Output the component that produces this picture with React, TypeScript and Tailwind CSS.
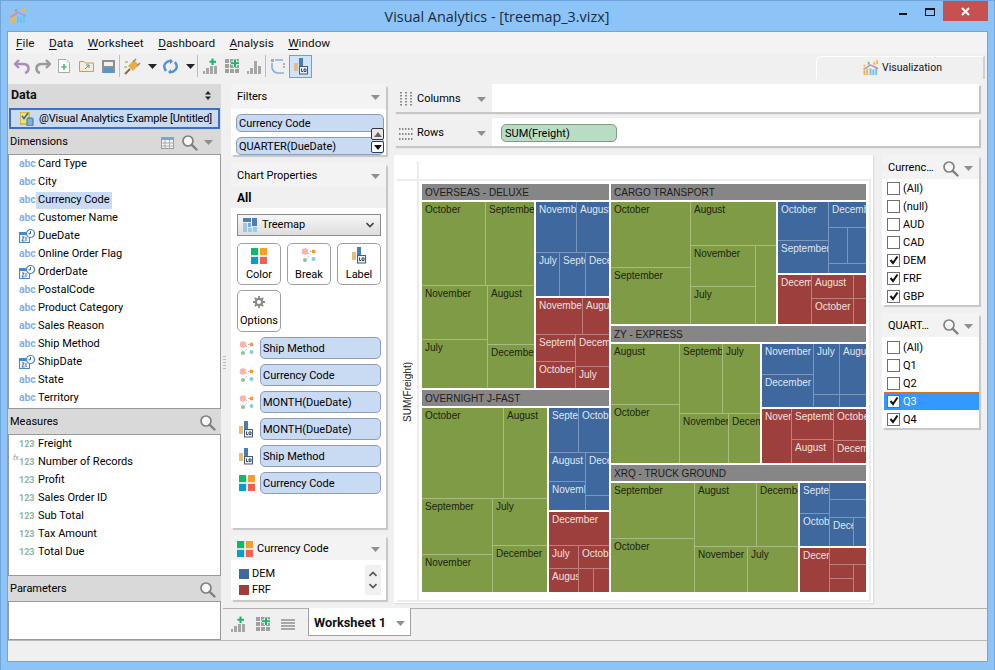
import React from "react";

type Cell = [number, number, number, number, string?];
type Group = { kind: "g" | "b" | "r"; box: [number, number, number, number]; cells: Cell[] };
type Pane = { h: Cell; groups: Group[] };

const panes: Pane[] = [
  {
    h: [422, 184, 609, 200, "OVERSEAS - DELUXE"],
    groups: [
      { kind: "g", box: [422, 202, 534, 388], cells: [[422, 202, 485, 285, "October"], [486, 202, 534, 285, "September"], [422, 286, 487, 339, "November"], [422, 340, 487, 388, "July"], [488, 286, 534, 344, "August"], [488, 345, 534, 388, "December"]] },
      { kind: "b", box: [536, 202, 609, 296], cells: [[536, 202, 576, 252, "November"], [577, 202, 609, 252, "August"], [536, 253, 559, 296, "July"], [560, 253, 585, 296, "September"], [586, 253, 609, 296, "December"]] },
      { kind: "r", box: [536, 298, 609, 388], cells: [[536, 298, 582, 334, "November"], [583, 298, 609, 334, "August"], [536, 335, 575, 361, "September"], [536, 362, 575, 388, "October"], [576, 335, 609, 366, "December"], [576, 367, 609, 388, "July"]] },
    ],
  },
  {
    h: [611, 184, 866, 200, "CARGO TRANSPORT"],
    groups: [
      { kind: "g", box: [611, 202, 776, 324], cells: [[611, 202, 690, 267, "October"], [611, 268, 690, 324, "September"], [691, 202, 776, 245, "August"], [691, 246, 755, 286, "November"], [691, 287, 755, 324, "July"], [756, 246, 776, 324]] },
      { kind: "b", box: [778, 202, 866, 273], cells: [[778, 202, 828, 240, "October"], [778, 241, 828, 273, "September"], [829, 202, 866, 227, "December"], [829, 228, 847, 263], [848, 228, 866, 263], [829, 264, 866, 273]] },
      { kind: "r", box: [778, 275, 866, 324], cells: [[778, 275, 811, 324, "December"], [812, 275, 853, 298, "August"], [812, 299, 853, 324, "October"], [854, 275, 866, 298], [854, 299, 866, 324]] },
    ],
  },
  {
    h: [611, 326, 866, 342, "ZY - EXPRESS"],
    groups: [
      { kind: "g", box: [611, 344, 760, 463], cells: [[611, 344, 679, 404, "August"], [611, 405, 679, 463, "October"], [680, 344, 722, 413, "September"], [723, 344, 760, 413, "July"], [680, 414, 728, 463, "November"], [729, 414, 760, 463, "December"]] },
      { kind: "b", box: [762, 344, 866, 407], cells: [[762, 344, 813, 374, "November"], [762, 375, 813, 407, "December"], [814, 344, 839, 394, "July"], [840, 344, 866, 394, "August"], [814, 395, 839, 407], [840, 395, 866, 407]] },
      { kind: "r", box: [762, 409, 866, 463], cells: [[762, 409, 791, 463, "November"], [792, 409, 833, 439, "September"], [792, 440, 833, 463, "August"], [834, 409, 866, 440, "October"], [834, 441, 866, 463, "December"]] },
    ],
  },
  {
    h: [611, 465, 866, 481, "XRQ - TRUCK GROUND"],
    groups: [
      { kind: "g", box: [611, 483, 798, 592], cells: [[611, 483, 694, 538, "September"], [611, 539, 694, 592, "October"], [695, 483, 756, 546, "August"], [757, 483, 798, 546, "December"], [695, 547, 747, 592, "November"], [748, 547, 798, 592, "July"]] },
      { kind: "b", box: [800, 483, 866, 546], cells: [[800, 483, 829, 513, "September"], [800, 514, 829, 546, "October"], [830, 483, 866, 499], [830, 500, 866, 517], [830, 518, 853, 546, "December"], [854, 518, 866, 546]] },
      { kind: "r", box: [800, 548, 866, 592], cells: [[800, 548, 829, 592, "December"], [830, 548, 866, 564], [830, 565, 853, 578], [830, 579, 853, 592], [854, 565, 866, 592]] },
    ],
  },
  {
    h: [422, 390, 609, 406, "OVERNIGHT J-FAST"],
    groups: [
      { kind: "g", box: [422, 408, 547, 592], cells: [[422, 408, 503, 498, "October"], [504, 408, 547, 498, "August"], [422, 499, 492, 554, "September"], [422, 555, 492, 592, "November"], [493, 499, 547, 545, "July"], [493, 546, 547, 592, "December"]] },
      { kind: "b", box: [549, 408, 609, 510], cells: [[549, 408, 578, 452, "September"], [579, 408, 609, 452, "October"], [549, 453, 585, 481, "August"], [549, 482, 585, 510, "November"], [586, 453, 609, 495, "December"], [586, 496, 609, 510]] },
      { kind: "r", box: [549, 512, 609, 592], cells: [[549, 512, 609, 545, "December"], [549, 546, 578, 568, "July"], [579, 546, 609, 568, "October"], [549, 569, 578, 592, "August"], [579, 569, 593, 592], [594, 569, 609, 592]] },
    ],
  },
];

const tone = {
  g: { fill: "#7f9b46", line: "#a9bc80", text: "#1d2410" },
  b: { fill: "#3f689e", line: "#7c97bd", text: "#dfe7f2" },
  r: { fill: "#9c3f3d", line: "#c07f7d", text: "#f3e0df" },
};

function Treemap() {
  return (
    <svg width={450} height={419} viewBox="419 181 450 419" className="block font-['Liberation_Sans',sans-serif]">
      {panes.map((p, i) => (
        <g key={i}>
          <svg x={p.h[0]} y={p.h[1]} width={p.h[2] - p.h[0]} height={p.h[3] - p.h[1]}>
            <rect width="100%" height="100%" fill="#868686" />
            <text x={3} y={12} fontSize={10} fill="#1c1c1c">{p.h[4]}</text>
          </svg>
          {p.groups.map((g, j) => (
            <g key={j}>
              <rect x={g.box[0]} y={g.box[1]} width={g.box[2] - g.box[0]} height={g.box[3] - g.box[1]} fill={tone[g.kind].line} />
              {g.cells.map((c, k) => (
                <svg key={k} x={c[0]} y={c[1]} width={c[2] - c[0]} height={c[3] - c[1]}>
                  <rect width="100%" height="100%" fill={tone[g.kind].fill} />
                  {c[4] ? <text x={3} y={11} fontSize={10} fill={tone[g.kind].text}>{c[4]}</text> : null}
                </svg>
              ))}
            </g>
          ))}
        </g>
      ))}
    </svg>
  );
}

/* ---------- icons ---------- */
function Logo({ s = 17 }: { s?: number }) {
  return (
    <svg width={s} height={s} viewBox="0 0 17 17">
      <rect x="0.5" y="11" width="2" height="5" fill="#f6b73c" />
      <rect x="3.5" y="9" width="2" height="7" fill="#f6b73c" />
      <rect x="7" y="9" width="2" height="7" fill="#6cc4ee" />
      <rect x="10" y="10" width="2" height="6" fill="#6cc4ee" />
      <rect x="13" y="8" width="2" height="8" fill="#6cc4ee" />
      <path d="M0.5 10 L8 5.5 L16 9" fill="none" stroke="#c58fc0" strokeWidth="1.6" />
      <rect x="0.5" y="5" width="2" height="2" fill="#f6b73c" />
      <rect x="5" y="2" width="2" height="3" fill="#85b38a" />
      <rect x="11" y="2" width="2" height="3" fill="#f6b73c" />
      <rect x="14" y="0.5" width="2" height="4" fill="#f6b73c" />
    </svg>
  );
}
function Arrow({ c = "#8f8f8f" }: { c?: string }) {
  return (
    <svg width="9" height="5" viewBox="0 0 9 5" className="shrink-0">
      <path d="M0 0H9L4.5 5Z" fill={c} />
    </svg>
  );
}
function Mag() {
  return (
    <svg width="17" height="17" viewBox="0 0 17 17" className="shrink-0">
      <circle cx="7" cy="7" r="5" fill="#f6f6f6" stroke="#808080" strokeWidth="1.7" />
      <path d="M10.8 10.8L15.5 15.5" stroke="#808080" strokeWidth="2.4" strokeLinecap="round" />
    </svg>
  );
}
function Undo({ c, flip }: { c: string; flip?: boolean }) {
  return (
    <svg width="16" height="15" viewBox="0 0 16 15" style={flip ? { transform: "scaleX(-1)" } : undefined}>
      <path d="M5 1L1 5L5 9" fill="none" stroke={c} strokeWidth="2.4" />
      <path d="M2 5H9Q14.5 5 14.5 9.5Q14.5 13 11 14" fill="none" stroke={c} strokeWidth="2.6" />
    </svg>
  );
}
function Bars({ plus }: { plus?: boolean }) {
  return (
    <svg width="15" height="16" viewBox="0 0 15 16">
      <rect x="0" y="13" width="2" height="3" fill="#a6a6a6" />
      <rect x="3" y="10" width="3" height="6" fill="#a6a6a6" />
      <rect x="7" y={plus ? 8 : 3} width="3" height={plus ? 8 : 13} fill="#a6a6a6" />
      <rect x="11" y="8" width="3" height="8" fill="#a6a6a6" />
      {plus ? <path d="M9.5 0.5V7M6.5 3.7H13" stroke="#14b866" strokeWidth="2" /> : null}
    </svg>
  );
}
function GridAdd() {
  return (
    <svg width="15" height="15" viewBox="0 0 15 15">
      {[0, 5, 10].map((x) => [0, 5, 10].map((y) => <rect key={`${x}${y}`} x={x} y={y} width="4" height="4" fill="#a0a0a0" />))}
      <path d="M10 0.5V8M6 4.2H14" stroke="#ffffff" strokeWidth="3.6" />
      <path d="M10 0.5V8M6 4.2H14" stroke="#14b866" strokeWidth="2" />
    </svg>
  );
}
function LabelIcon() {
  return (
    <svg width="14" height="17" viewBox="0 0 14 17">
      <rect x="0" y="5" width="4" height="8" fill="#e2bd7d" />
      <rect x="5" y="0" width="4" height="9" fill="#4c7bb0" />
      <rect x="5.5" y="8.5" width="8" height="7.5" fill="#e8eef5" stroke="#4a5a6a" />
      <path d="M7.5 10.5V13.5H9M10 11H12V13.5H10Z" fill="none" stroke="#3b4a5a" strokeWidth="1" />
    </svg>
  );
}
function BreakIcon() {
  return (
    <svg width="16" height="15" viewBox="0 0 16 15">
      <circle cx="4" cy="3.5" r="3.3" fill="#f6b6ae" />
      <circle cx="12.5" cy="3.5" r="2" fill="#f79a2d" />
      <circle cx="4" cy="12" r="2" fill="#8cc68f" />
      <circle cx="12.5" cy="11" r="2" fill="#85c8f2" />
      <path d="M7 5L10 7M9 3.5H10M6 10L8 8" stroke="#aaaaaa" strokeWidth="1" strokeDasharray="1 1" />
    </svg>
  );
}
function ColorIcon() {
  return (
    <svg width="16" height="16" viewBox="0 0 16 16">
      <rect x="0" y="0" width="7.2" height="7.2" fill="#0fb96c" />
      <rect x="8.8" y="0" width="7.2" height="7.2" fill="#f99e2b" />
      <rect x="0" y="8.8" width="7.2" height="7.2" fill="#0a9dcb" />
      <rect x="8.8" y="8.8" width="7.2" height="7.2" fill="#f55f50" />
    </svg>
  );
}
function Gear() {
  return (
    <svg width="12" height="12" viewBox="0 0 12 12">
      <circle cx="6" cy="6" r="3.2" fill="none" stroke="#8a8a8a" strokeWidth="2.2" />
      <path d="M6 0V2.5M6 9.5V12M0 6H2.5M9.5 6H12M1.8 1.8L3.5 3.5M8.5 8.5L10.2 10.2M10.2 1.8L8.5 3.5M3.5 8.5L1.8 10.2" stroke="#8a8a8a" strokeWidth="1.8" />
    </svg>
  );
}
function TreeIcon() {
  return (
    <svg width="14" height="15" viewBox="0 0 14 15">
      <rect x="0" y="0" width="8" height="4" fill="#4b7fb4" />
      <rect x="9" y="0" width="5" height="8" fill="#4b7fb4" />
      <rect x="0" y="5" width="4" height="9" fill="#a9c3dc" />
      <rect x="5" y="5" width="3" height="4" fill="#6fb4e0" />
      <rect x="5" y="10" width="4" height="4" fill="#8dd0f3" />
      <rect x="10" y="9" width="4" height="5" fill="#8dd0f3" />
    </svg>
  );
}
function DateIcon() {
  return (
    <svg width="16" height="14" viewBox="0 0 16 14" className="shrink-0">
      <rect x="0.5" y="3.5" width="10" height="10" fill="#eaf2fb" stroke="#4a86c8" />
      <rect x="0" y="3" width="11" height="3" fill="#4a86c8" />
      <path d="M3 8H5L3 12H5.5M7 8V12" stroke="#3f79b8" strokeWidth="1" fill="none" />
      <circle cx="11.5" cy="4.5" r="4" fill="#ffffff" stroke="#4a86c8" strokeWidth="1.2" />
      <path d="M11.5 2V4.8H9.5" stroke="#35618f" strokeWidth="1" fill="none" />
    </svg>
  );
}

/* ---------- shared small pieces ---------- */
const dims: [string, "abc" | "date"][] = [
  ["Card Type", "abc"], ["City", "abc"], ["Currency Code", "abc"], ["Customer Name", "abc"], ["DueDate", "date"],
  ["Online Order Flag", "abc"], ["OrderDate", "date"], ["PostalCode", "abc"], ["Product Category", "abc"],
  ["Sales Reason", "abc"], ["Ship Method", "abc"], ["ShipDate", "date"], ["State", "abc"], ["Territory", "abc"],
];
const measures = ["Freight", "Number of Records", "Profit", "Sales Order ID", "Sub Total", "Tax Amount", "Total Due"];

function PanelHead({ children, top = "pt-[2px]" }: { children: React.ReactNode; top?: string }) {
  return <div className={`h-[25px] shrink-0 flex items-center px-[2px] bg-[#d9d9d9] ${top}`}>{children}</div>;
}
function Pill({ children, cls = "" }: { children: React.ReactNode; cls?: string }) {
  return (
    <div className={`flex items-center rounded-[5px] border border-[#8e9db5] bg-[#c9daf3] pl-[2px] pt-[2px] whitespace-nowrap ${cls}`}>
      {children}
    </div>
  );
}
function Check({ label, on, hot }: { label: string; on?: boolean; hot?: boolean }) {
  return (
    <div className={`h-[18px] flex items-center gap-[3px] ${hot ? "ml-[2px] pl-[3px] bg-[#3399ff] text-white outline-1 outline-dotted outline-[#d9701a] -outline-offset-1" : "pl-[5px]"}`}>
      <span className="w-[13px] h-[13px] border border-[#707070] bg-white flex items-center justify-center shrink-0">
        {on ? (
          <svg width="10" height="10" viewBox="0 0 10 10">
            <path d="M1.5 5L4 8L8.5 1.5" fill="none" stroke="#111" strokeWidth="2" />
          </svg>
        ) : null}
      </span>
      <span className="leading-none">{label}</span>
    </div>
  );
}
const cardCls = "bg-white rounded-t-[3px] shadow-[2px_2px_1px_#c6c6c6]";

function BtnCard({ icon, label, small }: { icon: React.ReactNode; label: string; small?: boolean }) {
  return (
    <div className={`w-[44px] h-[42px] rounded-[5px] border border-[#a0a0a0] bg-white flex flex-col items-center ${small ? "pt-[4px] gap-[6px]" : "pt-[3px] gap-[5px]"}`}>
      <div className={`${small ? "h-[14px]" : "h-[17px]"} flex items-center`}>{icon}</div>
      <span className="leading-none">{label}</span>
    </div>
  );
}
function Menu({ u, rest }: { u: string; rest: string }) {
  return (
    <span>
      <span className="underline underline-offset-2">{u}</span>
      {rest}
    </span>
  );
}

export default function App() {
  return (
    <div className="w-[995px] h-[670px] overflow-hidden flex flex-col bg-[#8cc4f8] border-t border-x border-[#6fa5da] text-[11px] text-black font-[Roboto,sans-serif]">
      {/* title bar */}
      <div className="h-[30px] shrink-0 flex items-start relative">
        <div className="pl-[9px] pt-[6px]"><Logo /></div>
        <div className="flex-1 text-center text-[14.4px] pt-[6px] leading-[20px] text-[#1d2a3a] pl-[68px] font-['Open_Sans',sans-serif]">Visual Analytics - [treemap_3.vizx]</div>
        <div className="flex items-start">
          <div className="w-[8px] h-[2px] bg-[#111] mt-[12px] mr-[18px]" />
          <div className="w-[10px] h-[8px] border border-t-2 border-[#111] mt-[7px] mr-[8px]" />
          <div className="w-[45px] h-[20px] bg-[#c75050] flex items-center justify-center mr-[6px]">
            <svg width="9" height="9" viewBox="0 0 9 9"><path d="M1 1L8 8M8 1L1 8" stroke="#fff" strokeWidth="2" /></svg>
          </div>
        </div>
      </div>

      {/* client */}
      <div className="flex-1 flex flex-col mx-[6px] mb-[8px] border border-[#74a5da] bg-[#f0f0f0] min-h-0">
        {/* menu */}
        <div className="h-[21px] shrink-0 flex items-center gap-[14.4px] pl-[8px] text-[11.8px] text-[#111] pt-[3px] bg-[#f3f3f3]">
          <Menu u="F" rest="ile" />
          <Menu u="D" rest="ata" />
          <Menu u="W" rest="orksheet" />
          <Menu u="D" rest="ashboard" />
          <Menu u="A" rest="nalysis" />
          <Menu u="W" rest="indow" />
        </div>
        {/* toolbar */}
        <div className="h-[26px] shrink-0 flex items-center pl-[6px]">
          <div className="flex items-center w-[105px]">
            <Undo c="#a98dbd" />
            <div className="ml-[5px] flex"><Undo c="#9a9a9a" flip /></div>
            <svg width="12" height="14" viewBox="0 0 12 14" className="ml-[7px]"><path d="M0.5 0.5H8L11.5 4V13.5H0.5Z" fill="#fff" stroke="#a9a9a9" /><path d="M6 5V11M3 8H9" stroke="#1caa5a" strokeWidth="1.2" /></svg>
            <svg width="15" height="12" viewBox="0 0 15 12" className="ml-[9px]"><path d="M0.5 11.5V1.5H5L6.5 3H14.5V11.5Z" fill="#f4ecd5" stroke="#c59f58" /><path d="M6 9L10 5M7 5H10V8" stroke="#4a90c2" fill="none" /></svg>
            <svg width="13" height="13" viewBox="0 0 13 13" className="ml-[8px]"><rect x="0" y="0" width="13" height="13" fill="#8f8f8f" /><rect x="2" y="2" width="9" height="4" fill="#f0f0f0" /><rect x="2" y="8" width="9" height="5" fill="#5a93c8" /></svg>
          </div>
          <div className="w-px h-[22px] bg-[#bdbdbd]" />
          <div className="flex items-center ml-[4px]">
            <svg width="17" height="17" viewBox="0 0 17 17"><path d="M1 16L6 11" stroke="#8a6d3a" strokeWidth="2" /><path d="M4 8L9 13L15 7L10 2Z" fill="#e9ad45" /><path d="M12 1L9 4M16 5L13 8" stroke="#8f8f8f" strokeWidth="1.6" /><path d="M1 4H4M0 9H3" stroke="#a2c46d" strokeWidth="1.4" /></svg>
            <div className="ml-[7px]"><Arrow c="#222" /></div>
            <svg width="15" height="15" viewBox="0 0 15 15" className="ml-[6px]"><path d="M3 12Q-1 6 4 3Q6 1.5 9 2M12 3Q16 9 11 12Q9 13.5 6 13" fill="none" stroke="#4f93d6" strokeWidth="2.4" /><path d="M7 0L10 2.2L7 5ZM8 10L5 13L8 15Z" fill="#4f93d6" /></svg>
            <div className="ml-[8px]"><Arrow c="#222" /></div>
          </div>
          <div className="w-px h-[22px] bg-[#bdbdbd] ml-[2px]" />
          <div className="flex items-center gap-[7px] ml-[5px]">
            <Bars plus />
            <GridAdd />
            <Bars />
          </div>
          <div className="w-px h-[22px] bg-[#bdbdbd] ml-[3px]" />
          <svg width="15" height="15" viewBox="0 0 15 15" className="ml-[5px]"><path d="M1 4V9Q2 13 6 14H13M4 1H12" fill="none" stroke="#7fb2dd" strokeWidth="1.6" /><path d="M13 4V10" stroke="#9a9a9a" strokeWidth="1.4" strokeDasharray="2 1" /><rect x="0" y="0" width="3" height="3" fill="#aaa" /></svg>
          <div className="w-[23px] h-[23px] ml-[3px] border border-[#5ba6ea] bg-[#cde4fa] flex items-center justify-center"><LabelIcon /></div>
          <div className="flex-1" />
          <div className="w-[169px] h-[23px] mr-[2px] self-end rounded-tl-[6px] border-t border-l border-white border-r-2 border-r-[#d0d0d0] bg-[#f0f0f0] flex items-center gap-[3px] pl-[46px]">
            <Logo s={16} />
            <span className="text-[#112] text-[10.5px]">Visualization</span>
          </div>
        </div>

        {/* body */}
        <div className="flex-1 flex mt-[5px] min-h-0">
          {/* left data panel */}
          <div className="w-[213px] shrink-0 flex flex-col bg-[#d9d9d9]">
            <div className="h-[23px] shrink-0 flex items-center justify-between pl-[3px] pr-[10px] font-bold text-[#111] text-[12.5px]">
              <span>Data</span>
              <svg width="6" height="9" viewBox="0 0 6 9"><path d="M0 3.5L3 0L6 3.5ZM0 5.5L3 9L6 5.5Z" fill="#222" /></svg>
            </div>
            <div className="h-[21px] shrink-0 mx-[1px] mt-[1px] border-2 border-[#3f6fc0] bg-[#c9daf3] flex items-center pl-[9px] gap-[5px] whitespace-nowrap">
              <svg width="14" height="14" viewBox="0 0 14 14"><rect x="0" y="0" width="9" height="12" fill="#f5df6a" stroke="#b79a2a" /><path d="M2 4L4 6.5L8 1" stroke="#1b6db0" strokeWidth="1.4" fill="none" /><rect x="7" y="6" width="6" height="8" rx="1" fill="#7fb0da" stroke="#3f6fa0" /></svg>
              <span className="tracking-[-0.15px] pt-[1px]">@Visual Analytics Example [Untitled]</span>
            </div>
            <PanelHead>
              <span className="flex-1">Dimensions</span>
              <svg width="13" height="12" viewBox="0 0 13 12" className="mr-[7px]"><rect x="0.5" y="0.5" width="12" height="11" fill="#f7f7f7" stroke="#9a9a9a" /><rect x="0" y="0" width="13" height="3" fill="#6faadd" /><path d="M0 6H13M0 9H13M4 3V12M8.5 3V12" stroke="#aaa" strokeWidth="1" /></svg>
              <Mag />
              <div className="ml-[6px] mr-[6px]"><Arrow /></div>
            </PanelHead>
            <div className="h-[255px] shrink-0 border border-[#999] bg-white">
              {dims.map(([n, t]) => (
                <div key={n} className="h-[18px] flex items-center pl-[10px]">
                  <span className="w-[17px] shrink-0 flex items-center">
                    {t === "abc" ? <span className="text-[#86b0e6] font-bold text-[10.5px] leading-none tracking-[-0.2px]">abc</span> : <DateIcon />}
                  </span>
                  <span className={`px-[2px] h-[17px] flex items-center ${n === "Currency Code" ? "bg-[#c9daf3]" : ""}`}>{n}</span>
                </div>
              ))}
            </div>
            <PanelHead top="pt-[1px]">
              <span className="flex-1 pt-[1px]">Measures</span>
              <div className="mr-[3px]"><Mag /></div>
            </PanelHead>
            <div className="h-[142px] shrink-0 border border-[#999] bg-white">
              {measures.map((n) => (
                <div key={n} className="h-[18px] flex items-center pl-[4px]">
                  <span className="w-[6px] text-[#8a9a90] text-[7px] italic leading-none self-start pt-[2px]">{n === "Number of Records" ? "fx" : ""}</span>
                  <span className="w-[17px] text-[#8ab5a5] text-[9px] font-bold leading-none">123</span>
                  <span className="px-[2px]">{n}</span>
                </div>
              ))}
            </div>
            <PanelHead>
              <span className="flex-1">Parameters</span>
              <div className="mr-[3px]"><Mag /></div>
            </PanelHead>
            <div className="flex-1 border border-[#999] bg-white" />
          </div>

          {/* gutter */}
          <div className="w-[2px] shrink-0" />
          <div className="flex-1 flex flex-col min-w-0">
            <div className="flex-1 flex min-h-0">
              <div className="w-[8px] shrink-0 flex items-center justify-start pt-[34px]">
                <div className="w-[3px] h-[15px] bg-[repeating-linear-gradient(#bbb_0_1px,transparent_1px_3px)]" />
              </div>
              {/* middle column */}
              <div className="w-[155px] shrink-0 flex flex-col">
                <div className={`${cardCls} h-[71px] relative`}>
                  <div className="h-[25px] flex items-center justify-between px-[6px] pt-[2px] bg-[#f3f3f3] rounded-t-[3px]">
                    <span>Filters</span>
                    <Arrow />
                  </div>
                  <div className="flex flex-col gap-[5px] pt-[5px] pl-[5px] pr-[2px]">
                    <Pill cls="h-[18px]">Currency Code</Pill>
                    <Pill cls="h-[18px]">QUARTER(DueDate)</Pill>
                  </div>
                  <div className="absolute left-[140px] top-[44px] w-[13px] h-[12px] border border-[#333] bg-[#e8e8e8] rounded-[2px] flex items-center justify-center">
                    <svg width="8" height="5" viewBox="0 0 8 5"><path d="M4 0L8 5H0Z" fill="#666" /></svg>
                  </div>
                  <div className="absolute left-[140px] top-[57px] w-[13px] h-[12px] border border-[#1f3f6f] bg-white rounded-[2px] flex items-center justify-center">
                    <svg width="8" height="5" viewBox="0 0 8 5"><path d="M0 0H8L4 5Z" fill="#111" /></svg>
                  </div>
                </div>
                <div className={`${cardCls} mt-[8px] h-[365px] flex flex-col`}>
                  <div className="h-[24px] flex items-center justify-between px-[6px] pt-[3px] bg-[#f3f3f3] rounded-t-[3px]">
                    <span>Chart Properties</span>
                    <Arrow />
                  </div>
                  <div className="h-[21px] flex items-center px-[6px] bg-[#f0f0f0] font-bold text-[12px]">All</div>
                  <div className="ml-[6px] mr-[5px] mt-[6px] h-[22px] border border-[#8c8c8c] bg-linear-to-b from-[#f6f6f6] to-[#dedede] flex items-center pl-[5px] pr-[6px] gap-[5px]">
                    <TreeIcon />
                    <span className="flex-1">Treemap</span>
                    <svg width="8" height="6" viewBox="0 0 8 6"><path d="M0.5 1L4 4.5L7.5 1" fill="none" stroke="#444" strokeWidth="1.6" /></svg>
                  </div>
                  <div className="mx-[6px] mt-[7px] grid grid-cols-[44px_44px_44px] gap-x-[6px] gap-y-[5px]">
                    <BtnCard icon={<ColorIcon />} label="Color" />
                    <BtnCard icon={<BreakIcon />} label="Break" />
                    <BtnCard icon={<LabelIcon />} label="Label" />
                    <BtnCard icon={<Gear />} label="Options" small />
                  </div>
                  <div className="ml-[6px] mr-[5px] mt-[5px] flex flex-col gap-[5px]">
                    {([
                      [<BreakIcon key="a" />, "Ship Method"],
                      [<BreakIcon key="b" />, "Currency Code"],
                      [<BreakIcon key="c" />, "MONTH(DueDate)"],
                      [<LabelIcon key="d" />, "MONTH(DueDate)"],
                      [<LabelIcon key="e" />, "Ship Method"],
                      [<ColorIcon key="f" />, "Currency Code"],
                    ] as [React.ReactNode, string][]).map(([ic, t], i) => (
                      <div key={i} className="flex items-center">
                        <div className="w-[23px] pl-[2px] flex items-center">{ic}</div>
                        <Pill cls="flex-1 h-[22px]">{t}</Pill>
                      </div>
                    ))}
                  </div>
                </div>
                <div className={`${cardCls} mt-[7px] h-[65px] flex flex-col`}>
                  <div className="h-[25px] flex items-center px-[6px] pt-[3px] bg-[#f3f3f3] rounded-t-[3px] gap-[4px] shrink-0">
                    <ColorIcon />
                    <span className="flex-1">Currency Code</span>
                    <Arrow />
                  </div>
                  <div className="flex flex-1 pl-[8px] pr-[5px] pt-[8px] pb-[5px]">
                    <div className="flex-1 flex flex-col gap-[5px] leading-none">
                      <div className="flex items-center gap-[3px]"><span className="w-[10px] h-[10px] bg-[#3f689e]" />DEM</div>
                      <div className="flex items-center gap-[3px]"><span className="w-[10px] h-[10px] bg-[#9c3f3d]" />FRF</div>
                    </div>
                    <div className="w-[16px] -mt-[3px] bg-[#f0f0f0] flex flex-col items-center justify-center gap-[6px]">
                      <svg width="8" height="6" viewBox="0 0 8 6"><path d="M0.5 5L4 1.5L7.5 5" fill="none" stroke="#555" strokeWidth="1.6" /></svg>
                      <svg width="8" height="6" viewBox="0 0 8 6"><path d="M0.5 1L4 4.5L7.5 1" fill="none" stroke="#555" strokeWidth="1.6" /></svg>
                    </div>
                  </div>
                </div>
              </div>

              {/* main */}
              <div className="w-[585px] ml-[8px] shrink-0 flex flex-col">
                <div className="h-[28px] flex bg-white shadow-[2px_2px_1px_#c6c6c6] shrink-0">
                  <div className="w-[98px] bg-[#f0f0f0] flex items-center pl-[5px] pt-[2px]">
                    <svg width="14" height="14" viewBox="0 0 14 14"><path d="M2 0V14M7 0V14M12 0V14" stroke="#8a8a8a" strokeWidth="2" strokeDasharray="1.5 1.5" /></svg>
                    <span className="ml-[4px] flex-1">Columns</span>
                    <div className="mr-[6px]"><Arrow /></div>
                  </div>
                </div>
                <div className="h-[28px] mt-[6px] flex bg-white shadow-[2px_2px_1px_#c6c6c6] shrink-0">
                  <div className="w-[98px] bg-[#f0f0f0] flex items-center pl-[5px] pt-[3px]">
                    <svg width="14" height="14" viewBox="0 0 14 14"><path d="M0 2H14M0 7H14M0 12H14" stroke="#8a8a8a" strokeWidth="2" strokeDasharray="1.5 1.5" /></svg>
                    <span className="ml-[4px] flex-1">Rows</span>
                    <div className="mr-[6px]"><Arrow /></div>
                  </div>
                  <div className="ml-[9px] mt-[6px] w-[116px] h-[18px] rounded-[5px] border border-[#7f9c88] bg-[#b9dcc2] flex items-center pl-[3px] pt-[2px]">SUM(Freight)</div>
                </div>
                <div className="flex mt-[9px]">
                  <div className="w-[479px] h-[448px] bg-white shadow-[1px_1px_1px_#dddddd] flex flex-col pt-[6px] pl-[3px] pr-[2px] pb-[1px] shrink-0">
                    <div className="h-[18px] ml-[20px] border-l-2 border-[#ececec]" />
                    <div className="h-[2px] bg-[#ececec]" />
                    <div className="flex-1 flex min-h-0">
                      <div className="w-[20px] flex items-center justify-center pt-[3px] pl-[1px]">
                        <span className="[writing-mode:vertical-rl] rotate-180 text-[10px] font-['Liberation_Sans',sans-serif] text-[#222] whitespace-nowrap">SUM(Freight)</span>
                      </div>
                      <div className="w-[2px] bg-[#ececec]" />
                      <Treemap />
                      <div className="w-[2px] bg-[#ececec]" />
                    </div>
                    <div className="h-[2px] bg-[#ececec]" />
                  </div>
                  <div className="w-[97px] ml-[9px] flex flex-col">
                    <div className={`${cardCls} h-[150px]`}>
                      <div className="h-[24px] flex items-center bg-[#f3f3f3] pl-[6px] pr-[6px] pt-[2px] rounded-t-[3px]">
                        <span className="flex-1">Currenc…</span>
                        <Mag />
                        <div className="ml-[5px]"><Arrow /></div>
                      </div>
                      <Check label="(All)" />
                      <Check label="(null)" />
                      <Check label="AUD" />
                      <Check label="CAD" />
                      <Check label="DEM" on />
                      <Check label="FRF" on />
                      <Check label="GBP" on />
                    </div>
                    <div className={`${cardCls} mt-[8px] h-[115px]`}>
                      <div className="h-[24px] flex items-center bg-[#f3f3f3] pl-[6px] pr-[6px] pt-[2px] rounded-t-[3px]">
                        <span className="flex-1">QUART…</span>
                        <Mag />
                        <div className="ml-[5px]"><Arrow /></div>
                      </div>
                      <div className="pt-[1px]">
                        <Check label="(All)" />
                        <Check label="Q1" />
                        <Check label="Q2" />
                        <Check label="Q3" on hot />
                        <Check label="Q4" on />
                      </div>
                    </div>
                  </div>
                </div>
              </div>
            </div>
            {/* worksheet tabs */}
            <div className="h-[32px] shrink-0 flex items-start border-t border-[#b0b0b0]">
              <div className="flex items-center gap-[10px] pl-[8px] pt-[7px] w-[85px]">
                <Bars plus />
                <GridAdd />
                <svg width="14" height="11" viewBox="0 0 14 11"><path d="M0 1H14M0 4H14M0 7H14M0 10H14" stroke="#8f8f8f" strokeWidth="1.4" /></svg>
              </div>
              <div className="w-[103px] h-[28px] -mt-px bg-white border border-t-0 border-[#a0a0a0] flex items-center pl-[5px] pr-[5px] pt-[3px] font-bold text-[12.8px] text-[#111] gap-[8px]">
                <span className="flex-1 whitespace-nowrap">Worksheet 1</span>
                <Arrow />
              </div>
            </div>
          </div>
        </div>
        {/* status */}
        <div className="h-[21px] shrink-0 border-t border-[#b8b8b8]" />
      </div>
    </div>
  );
}
